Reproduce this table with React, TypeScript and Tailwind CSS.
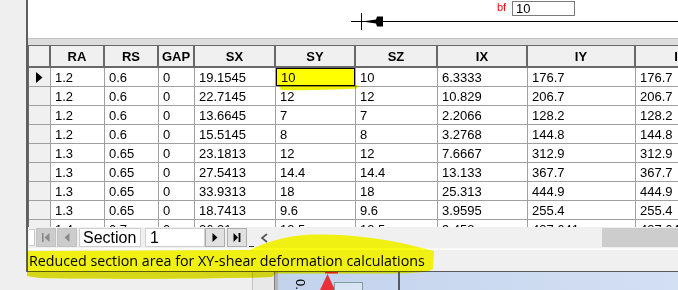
import React from 'react';

type Col = { label: string; w: string };

const COLS: Col[] = [
  { label: 'RA', w: 'w-[54px]' },
  { label: 'RS', w: 'w-[54px]' },
  { label: 'GAP', w: 'w-[36px]' },
  { label: 'SX', w: 'w-[81px]' },
  { label: 'SY', w: 'w-[80px]' },
  { label: 'SZ', w: 'w-[82px]' },
  { label: 'IX', w: 'w-[90px]' },
  { label: 'IY', w: 'w-[108px]' },
  { label: 'IZ', w: 'w-[90px]' },
];

const ROWS: string[][] = [
  ['1.2', '0.6', '0', '19.1545', '10', '10', '6.3333', '176.7', '176.7'],
  ['1.2', '0.6', '0', '22.7145', '12', '12', '10.829', '206.7', '206.7'],
  ['1.2', '0.6', '0', '13.6645', '7', '7', '2.2066', '128.2', '128.2'],
  ['1.2', '0.6', '0', '15.5145', '8', '8', '3.2768', '144.8', '144.8'],
  ['1.3', '0.65', '0', '23.1813', '12', '12', '7.6667', '312.9', '312.9'],
  ['1.3', '0.65', '0', '27.5413', '14.4', '14.4', '13.133', '367.7', '367.7'],
  ['1.3', '0.65', '0', '33.9313', '18', '18', '25.313', '444.9', '444.9'],
  ['1.3', '0.65', '0', '18.7413', '9.6', '9.6', '3.9595', '255.4', '255.4'],
  ['1.4', '0.7', '0', '26.21', '13.5', '13.5', '9.458', '437.641', '437.641'],
];

// section drawing strip above the grid
function DrawingPanel() {
  return (
    <div className="relative h-[38px] bg-white shrink-0">
      <svg className="absolute left-0 top-0" width="650" height="38">
        <line x1="323" y1="21.5" x2="650" y2="21.5" stroke="#000" strokeWidth="1" />
        <line x1="333.5" y1="13" x2="333.5" y2="30" stroke="#000" strokeWidth="1" />
        <polygon points="334,21.5 348,19.5 349,16.5 355,16.5 355,26.5 349,26.5 348,23.5" fill="#000" />
      </svg>
      <span className="absolute left-[469px] top-[2px] text-[11px] leading-none text-[#ff0000]">bf</span>
      <div className="absolute left-[484px] top-[1px] w-[63px] h-[15px] border border-[#7a7a7a] bg-white flex items-center pl-[3px] text-[13px] leading-none text-black">
        10
      </div>
    </div>
  );
}

function HeaderRow() {
  return (
    <div className="flex h-[22px] shrink-0">
      <div className="w-[22px] shrink-0 bg-[#f0f0f0] border-r-2 border-b-2 border-[#696969]" />
      {COLS.map((c) => (
        <div
          key={c.label}
          className={`${c.w} shrink-0 bg-[#f0f0f0] border-r-2 border-b-2 border-[#696969] flex items-center justify-center text-[13px] font-bold leading-none text-black`}
        >
          {c.label}
        </div>
      ))}
    </div>
  );
}

function DataRow({ values, index }: { values: string[]; index: number }) {
  return (
    <div className="flex h-[19px] shrink-0">
      <div className="w-[22px] shrink-0 bg-[#f0f0f0] border-r border-b border-[#a0a0a0] flex items-center pl-[7px]">
        {index === 0 && (
          <svg width="7" height="11" viewBox="0 0 7 11">
            <polygon points="0,0 6.5,5.5 0,11" fill="#000" />
          </svg>
        )}
      </div>
      {values.map((v, i) => {
        const selected = index === 0 && i === 4;
        return (
          <div
            key={i}
            className={`${COLS[i].w} shrink-0 bg-white border-r border-b border-[#a0a0a0] text-[13px] leading-none text-black`}
          >
            {selected ? (
              <div className="h-full w-full bg-[#ffff00] border border-black flex items-center pl-[4px]">{v}</div>
            ) : (
              <div className="h-full w-full flex items-center pl-[4px]">{v}</div>
            )}
          </div>
        );
      })}
    </div>
  );
}

function NavButton({ disabled, children }: { disabled?: boolean; children: React.ReactNode }) {
  return (
    <div
      className={
        disabled
          ? 'w-[20px] h-[19px] shrink-0 bg-[#cccccc] border border-[#c2c2c2] flex items-center justify-center'
          : 'w-[20px] h-[19px] shrink-0 bg-[#e1e1e1] border border-[#adadad] flex items-center justify-center'
      }
    >
      {children}
    </div>
  );
}

function Navigator() {
  return (
    <div className="h-[21px] shrink-0 bg-[#f0f0f0] flex items-start pt-[1px]">
      <div className="ml-[1px] mt-[1px] w-[6px] h-[17px] bg-white border border-[#c8c8c8] border-l-0" />
      <div className="ml-[1px]">
        <NavButton disabled>
          <svg width="8" height="9" viewBox="0 0 8 9">
            <rect x="0" y="0" width="1.6" height="9" fill="#8a8a8a" />
            <polygon points="7.5,0 7.5,9 2.5,4.5" fill="#8a8a8a" />
          </svg>
        </NavButton>
      </div>
      <div className="ml-[1px]">
        <NavButton disabled>
          <svg width="6" height="9" viewBox="0 0 6 9">
            <polygon points="5.5,0 5.5,9 0.5,4.5" fill="#8a8a8a" />
          </svg>
        </NavButton>
      </div>
      <div className="ml-[2px] w-[62px] h-[19px] shrink-0 bg-white border border-[#cfcfcf] flex items-center pl-[3px] text-[16px] leading-none text-black">
        Section
      </div>
      <div className="ml-[4px] w-[60px] h-[19px] shrink-0 bg-white border border-[#cfcfcf] flex items-center pl-[4px] text-[16px] leading-none text-black">
        1
      </div>
      <NavButton>
        <svg width="6" height="9" viewBox="0 0 6 9">
          <polygon points="0.5,0 0.5,9 5.5,4.5" fill="#000" />
        </svg>
      </NavButton>
      <div className="ml-[2px]">
        <NavButton>
          <svg width="8" height="9" viewBox="0 0 8 9">
            <polygon points="0.5,0 0.5,9 5,4.5" fill="#000" />
            <rect x="5.6" y="0" width="1.8" height="9" fill="#000" />
          </svg>
        </NavButton>
      </div>
      <div className="ml-[2px] w-[6px] h-[19px] shrink-0 flex items-end">
        <div className="w-[5px] h-[1px] bg-[#333]" />
      </div>
      <div className="ml-[5px] h-[19px] flex items-center">
        <svg width="9" height="10" viewBox="0 0 9 10">
          <polyline points="7,1 2,5 7,9" fill="none" stroke="#5a5a5a" strokeWidth="1.8" />
        </svg>
      </div>
      <div className="flex-1" />
      <div className="w-[76px] h-[19px] shrink-0 bg-[#cdcdcd]" />
    </div>
  );
}

function StatusBar() {
  return (
    <div className="h-[22px] shrink-0 bg-[#f0f0f0] border-b border-[#5a5a5a] flex items-center pt-[2px] pl-[1px] font-['Open_Sans',sans-serif] text-[14.25px] leading-none text-black whitespace-nowrap">
      Reduced section area for XY-shear deformation calculations
    </div>
  );
}

function BottomStrip() {
  return (
    <div className="flex h-[18px] shrink-0">
      <div className="w-[252px] shrink-0 bg-[#efefef]" />
      <div className="w-[22px] shrink-0 bg-[#e8e8e8] border-l border-[#c4c4c4]" />
      <div className="w-[4px] shrink-0 bg-[#b4b4b4] border-l border-[#808080]" />
      <div className="relative flex-1 bg-gradient-to-r from-[#c3d3ed] to-[#d3dff3]">
        <svg className="absolute left-0 top-0" width="400" height="18">
          <rect x="120" y="0" width="2" height="18" fill="#5a5a5a" />
          <rect x="47" y="0" width="13" height="1.5" fill="#e02028" />
          <polygon points="49.5,2 42,18 57,18" fill="#e8303a" />
          <rect x="56.5" y="10.5" width="28" height="10" fill="#d8e4f4" stroke="#7f9f9f" strokeWidth="1" />
        </svg>
        <span className="absolute left-[17px] top-[6px] rotate-90 text-[13px] leading-none text-black">0.</span>
      </div>
    </div>
  );
}

// highlighter marks drawn over the screenshot
function Highlights() {
  return (
    <svg className="absolute left-0 top-0 pointer-events-none mix-blend-multiply" width="678" height="290">
      <path d="M279 86 L357 85 L357 88.5 C330 90 300 90.5 281 90 Z" fill="#eef200" />
      <path
        d="M27 251 L250 250 C262 244 280 237 305 235 C340 233 380 238 410 245 L434 251 L433 268 C432 272 420 273.5 380 273.5 L276 273.5 L272 277 C200 279 100 279 40 278 L27 276 Z"
        fill="#ffff14"
      />
      <path d="M27 272 L276 272 L272 277 C200 279 100 279 40 278 L27 276 Z" fill="#e6e61a" />
    </svg>
  );
}

export default function App() {
  return (
    <div className="relative isolate w-[678px] h-[290px] overflow-hidden bg-[#efefef] font-['Liberation_Sans',Arial,sans-serif]">
      <div className="flex h-[272px]">
        <div className="w-[26px] shrink-0 bg-[#efefef]" />
        <div className="flex-1 min-w-0 flex flex-col border-l-2 border-[#5f5f5f] bg-[#f0f0f0]">
          <DrawingPanel />
          <div className="h-[7px] shrink-0 bg-[#dcdcdc] border-t border-[#c4c4c4]" />
          <div className="h-[182px] shrink-0 overflow-hidden border-l border-t border-[#696969] flex flex-col">
            <HeaderRow />
            {ROWS.map((r, i) => (
              <DataRow key={i} values={r} index={i} />
            ))}
          </div>
          <Navigator />
          <div className="h-[2px] shrink-0 bg-[#fbfbfb]" />
          <StatusBar />
        </div>
      </div>
      <BottomStrip />
      <Highlights />
    </div>
  );
}
